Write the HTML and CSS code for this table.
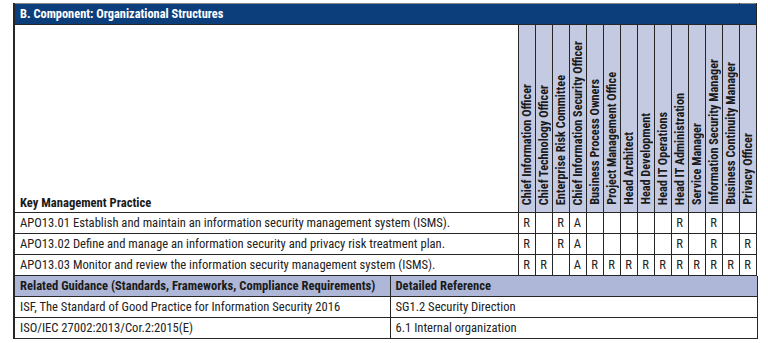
FILE: index.html
```html
<!DOCTYPE html>
<html lang="en">
<head>
<meta charset="utf-8">
<title>B. Component: Organizational Structures</title>
<link rel="stylesheet" href="styles.css">
</head>
<body>
<div class="sheet">
  <table class="matrix">
    <colgroup>
      <col class="c-kmp">
      <col class="c-role"><col class="c-role"><col class="c-role"><col class="c-role"><col class="c-role"><col class="c-role"><col class="c-role">
      <col class="c-role"><col class="c-role"><col class="c-role"><col class="c-role"><col class="c-role"><col class="c-role"><col class="c-role">
    </colgroup>
    <tr class="title-row">
      <th class="title" colspan="14">B. Component: Organizational Structures</th>
      <th class="title-end"></th>
    </tr>
    <tr class="head-row">
      <th class="kmp">Key Management Practice</th>
      <th class="role"><span>Chief Information Officer</span></th>
      <th class="role"><span>Chief Technology Officer</span></th>
      <th class="role"><span>Enterprise Risk Committee</span></th>
      <th class="role"><span>Chief Information Security Officer</span></th>
      <th class="role"><span>Business Process Owners</span></th>
      <th class="role"><span>Project Management Office</span></th>
      <th class="role"><span>Head Architect</span></th>
      <th class="role"><span>Head Development</span></th>
      <th class="role"><span>Head IT Operations</span></th>
      <th class="role"><span>Head IT Administration</span></th>
      <th class="role"><span>Service Manager</span></th>
      <th class="role"><span>Information Security Manager</span></th>
      <th class="role"><span>Business Continuity Manager</span></th>
      <th class="role"><span>Privacy Officer</span></th>
    </tr>
    <tr class="data-row">
      <td class="practice">APO13.01 Establish and maintain an information security management system (ISMS).</td>
      <td>R</td><td></td><td>R</td><td>A</td><td></td><td></td><td></td><td></td><td></td><td>R</td><td></td><td>R</td><td></td><td></td>
    </tr>
    <tr class="data-row">
      <td class="practice">APO13.02 Define and manage an information security and privacy risk treatment plan.</td>
      <td>R</td><td></td><td>R</td><td>A</td><td></td><td></td><td></td><td></td><td></td><td>R</td><td></td><td>R</td><td></td><td>R</td>
    </tr>
    <tr class="data-row">
      <td class="practice">APO13.03 Monitor and review the information security management system (ISMS).</td>
      <td>R</td><td>R</td><td></td><td>A</td><td>R</td><td>R</td><td>R</td><td>R</td><td>R</td><td>R</td><td>R</td><td>R</td><td>R</td><td>R</td>
    </tr>
  </table>
  <table class="guidance">
    <colgroup>
      <col class="c-std">
      <col class="c-ref">
    </colgroup>
    <tr class="guid-head">
      <th>Related Guidance (Standards, Frameworks, Compliance Requirements)</th>
      <th>Detailed Reference</th>
    </tr>
    <tr class="guid-row">
      <td>ISF, The Standard of Good Practice for Information Security 2016</td>
      <td>SG1.2 Security Direction</td>
    </tr>
    <tr class="guid-row">
      <td>ISO/IEC 27002:2013/Cor.2:2015(E)</td>
      <td>6.1 Internal organization</td>
    </tr>
  </table>
</div>
</body>
</html>
```
FILE: styles.css
```css
html, body {
  margin: 0;
  padding: 0;
  background: #ffffff;
}

body {
  font-family: "Roboto Condensed", "DejaVu Sans Condensed", "Liberation Sans Narrow", Roboto, "Liberation Sans", sans-serif;
  font-size: 12.6px;
  color: #1f1f1f;
}

.sheet {
  padding: 3px 0 0 13px;
  width: 743px;
}

table {
  border-collapse: collapse;
  table-layout: fixed;
  width: 743px;
}

.c-kmp { width: 504px; }
.c-role { width: 17px; }
.c-std { width: 376px; }
.c-ref { width: 367px; }

th, td {
  border: 1px solid #262626;
  padding: 0;
  line-height: 14px;
}

.matrix {
  border-left: 2px solid #262626;
}

.title-row th {
  background: #0d3e7c;
  color: #ffffff;
  height: 20px;
  text-align: left;
  font-weight: 700;
  font-size: 12.4px;
  border-top-color: #8a8a8a;
  border-bottom: 1px solid #262626;
}

.title {
  padding-left: 5px;
  border-right-color: #0d3e7c;
}

.title-end {
  border-left: 1px solid #262626;
}

.head-row th {
  height: 183px;
  vertical-align: bottom;
  font-weight: 700;
  color: #1a1a1a;
}

.kmp {
  text-align: left;
  padding: 0 0 2px 5px;
  background: #ffffff;
}

.role {
  background: #c4cae1;
  text-align: center;
  padding-bottom: 4px;
  font-size: 12.2px;
}

.role span {
  display: inline-block;
  writing-mode: vertical-rl;
  transform: rotate(180deg);
  white-space: nowrap;
  line-height: 16px;
}

.data-row td {
  height: 20px;
  text-align: center;
  color: #222222;
}

.data-row td.practice {
  text-align: left;
  padding-left: 5px;
  white-space: nowrap;
}

.guidance {
  border-left: 2px solid #262626;
}

.guidance tr:first-child th {
  border-top: none;
}

.guid-head th {
  background: #aeb7d8;
  height: 20px;
  text-align: left;
  padding-left: 5px;
  font-weight: 700;
  color: #1a1a1a;
}

.guid-row td {
  height: 20px;
  text-align: left;
  padding-left: 5px;
  color: #222222;
}
```
